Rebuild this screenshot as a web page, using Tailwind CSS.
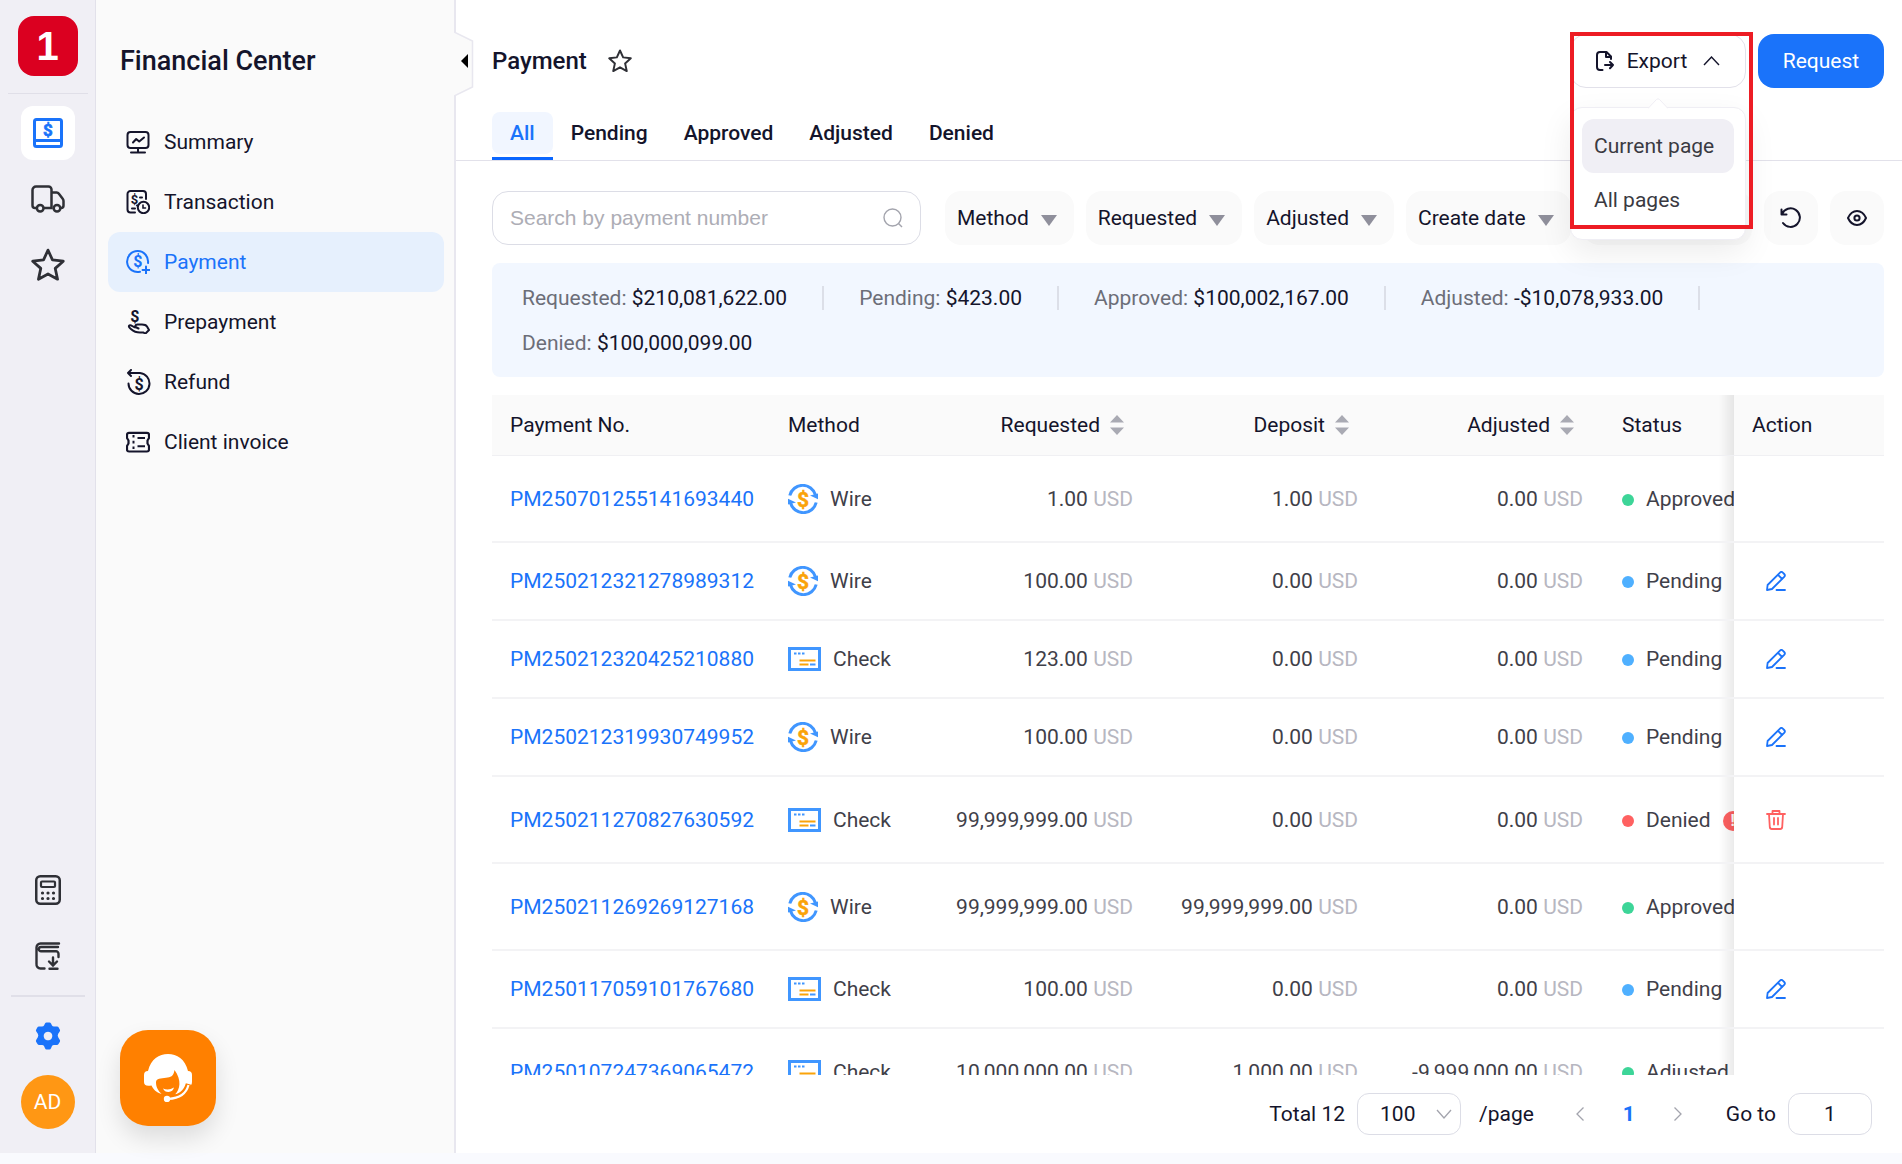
<!DOCTYPE html>
<html lang="en">
<head>
  <meta charset="UTF-8" />
  <meta name="viewport" content="width=device-width, initial-scale=1.0" />
  <title>Payment - Financial Center</title>
  <script src="https://cdn.jsdelivr.net/npm/@tailwindcss/browser@4"></script>
</head>
<body class="h-screen overflow-hidden flex flex-col bg-[#f9fafe] font-[Roboto,sans-serif] text-[21px] leading-[30px] text-[#14142b]">
  <!-- Shared icons -->
  <svg class="hidden">
    <symbol id="i-star" viewBox="0 0 32 32" fill="none" stroke="currentColor" stroke-width="2.6" stroke-linejoin="round">
      <path d="M16 2l4.2 9.200 10.200 1.200-7.600 6.800 2.200 10.200L16 24.400 7 29.400l2.200-10.200L1.600 12.400l10.200-1.200z" />
    </symbol>
    <symbol id="i-wire" viewBox="0 0 30 30">
      <path d="M1.800 11.500A13.300 13.300 0 0 1 27.500 11" fill="none" stroke="#4096ff" stroke-width="3" />
      <path d="M28.200 18.500A13.300 13.300 0 0 1 2.500 19" fill="none" stroke="#4096ff" stroke-width="3" />
      <path d="M22 11.500L30 9.500V15.200zM8 18.500L0 20.500V14.800z" fill="#4096ff" />
      <text x="15" y="22.500" text-anchor="middle" font-size="21" font-weight="700" fill="#faa30a" stroke="#faa30a" stroke-width=".5">$</text>
    </symbol>
    <symbol id="i-check" viewBox="0 0 33 24">
      <rect x="1.500" y="1.500" width="30" height="21" fill="none" stroke="#4096ff" stroke-width="3" />
      <path d="M6 6.500h2.500M10 6.500h2.500M14 6.500h2.500M22 17.500h5.500" stroke="#4096ff" stroke-width="2" />
      <path d="M11.500 13.500h16M11.500 17.500h9" stroke="#faa30a" stroke-width="2.200" />
    </symbol>
    <symbol id="i-edit" viewBox="0 0 20 20" fill="none" stroke="currentColor" stroke-width="1.800" stroke-linejoin="round" stroke-linecap="round">
      <path d="M1 19l.6-5L14 1.600a2 2 0 0 1 2.800 0l1.400 1.400a2 2 0 0 1 0 2.800L6 18zM12 3.800l4.200 4.200M10.500 19H19" />
    </symbol>
    <symbol id="i-trash" viewBox="0 0 20 20" fill="none" stroke="currentColor" stroke-width="1.800" stroke-linejoin="round" stroke-linecap="round">
      <path d="M1 4h18M6.500 4V1h7v3M3 4l.8 13.200a2 2 0 0 0 2 1.800h8.400a2 2 0 0 0 2-1.800L17 4M8 8v6.500M12 8v6.500" />
    </symbol>
  </svg>

  <div class="flex-1 min-h-0 flex bg-white">
    <!-- Icon rail -->
    <aside class="w-24 shrink-0 bg-[#f0eff5] border-r border-[#e2e1ea] flex flex-col items-center pt-4 pb-6">
      <a href="#" aria-label="Home" class="w-[60px] h-[60px] rounded-2xl bg-[#db0020] text-white flex items-center justify-center font-['Liberation_Sans',sans-serif] font-bold text-[40px]">1</a>
      <div class="w-20 h-px bg-[#e0dfe8] mt-[17px] mb-3"></div>
      <nav class="flex flex-col gap-3 text-[#2f3036]">
        <a href="#" aria-label="Finance" class="w-[54px] h-[54px] rounded-xl bg-white text-[#1a73fa] flex items-center justify-center">
          <svg class="w-[30px] h-[30px]" viewBox="0 0 30 30" fill="none" stroke="currentColor" stroke-width="3"><rect x="1.500" y="1.500" width="27" height="27" rx="2" /><path d="M1.500 22.500h27" /><text x="15" y="18" text-anchor="middle" font-size="17" font-weight="700" fill="currentColor" stroke="currentColor" stroke-width=".6">$</text></svg>
        </a>
        <a href="#" aria-label="Shipping" class="w-[54px] h-[54px] flex items-center justify-center">
          <svg class="w-[34px] h-[28px]" viewBox="0 0 34 28" fill="none" stroke="currentColor" stroke-width="2.500"><path d="M5.500 23H4a2.500 2.500 0 0 1-2.500-2.500V5A3.500 3.500 0 0 1 5 1.500h12.500A3 3 0 0 1 20.500 4.500V23H13M20.500 7.500h5.200q1.300 0 2 1l4 5.200q.8 1 .8 2.300v4.500A2.500 2.500 0 0 1 30 23" /><circle cx="9.200" cy="23.300" r="3.300" /><circle cx="26" cy="23.300" r="3.300" /></svg>
        </a>
        <a href="#" aria-label="Favorites" class="w-[54px] h-[54px] flex items-center justify-center"><svg class="w-[34px] h-[34px]"><use href="#i-star" /></svg></a>
      </nav>
      <nav class="mt-auto flex flex-col gap-3 text-[#2f3036]">
        <a href="#" aria-label="Calculator" class="w-[54px] h-[54px] flex items-center justify-center">
          <svg class="w-[26px] h-[30px]" viewBox="0 0 26 30" fill="none" stroke="currentColor" stroke-width="2.500"><rect x="1.250" y="1.250" width="23.500" height="27.500" rx="4" /><rect x="6" y="6.500" width="14" height="5.500" rx="1" stroke-width="2.200" /><path d="M7.500 18h.01M13 18h.01M18.500 18h.01M7.500 23.500h.01M13 23.500h.01M18.500 23.500h.01" stroke-width="3.200" stroke-linecap="round" /></svg>
        </a>
        <a href="#" aria-label="Downloads" class="w-[54px] h-[54px] flex items-center justify-center">
          <svg class="w-[26px] h-[28px]" viewBox="0 0 26 28" fill="none" stroke="currentColor" stroke-width="2.400" stroke-linecap="round"><path d="M24 1.500H5.500A4 4 0 0 0 1.500 5.500V22A4 4 0 0 0 5.500 26.500H9.500M23 5H6a2 2 0 0 0 0 4.300H21a2.500 2.500 0 0 1 2.500 2.500V15M18 15.500v7M14 19.500l4 4 4-4M14.500 26.700h8" /></svg>
        </a>
      </nav>
      <div class="w-[74px] h-0.5 bg-[#e0dfe8] mt-3 mb-3"></div>
      <a href="#" aria-label="Settings" class="w-[54px] h-[54px] flex items-center justify-center text-[#1a73fa]">
        <svg class="w-[26px] h-[28px]" viewBox="0 0 26 28"><path fill="currentColor" fill-rule="evenodd" d="M10 1.500Q10.500.5 11.500.5h3q1 0 1.500 1l1 2q.5 1 2 1h3q1.200 0 1.700 1l1.200 2.200q.5 1-.2 1.900l-1.500 2.200q-1 1.700 0 3.400l1.500 2.600q.7 1 .2 2l-1.400 2.200q-.5.900-1.600.900h-2.900q-1.500 0-2 1l-1 2.300q-.5 1.300-1.500 1.300h-3q-1 0-1.500-1.300l-1-2.300q-.5-1-2-1H4.100q-1.100 0-1.600-.9L1.100 19.800q-.5-1 .2-2l1.500-2.600q1-1.700 0-3.400L1.300 9.600q-.7-.9-.2-1.900l1.200-2.200q.5-1 1.700-1h3q1.500 0 2-1zM13 9.700a4.300 4.300 0 1 0 .01 0z" /></svg>
      </a>
      <button class="w-[54px] h-[54px] mt-3 rounded-full bg-[#ff9714] text-white">AD</button>
    </aside>

    <!-- Section menu -->
    <aside class="w-[360px] shrink-0 bg-[#fafafa] border-r-2 border-[#e8e7ef] pl-3 pr-[10px] pt-10">
      <h2 class="text-[27px] leading-[42px] font-medium pl-3 mb-[30px]">Financial Center</h2>
      <nav>
        <a href="#" class="h-[60px] px-[18px] flex items-center gap-3.5 rounded-xl">
          <svg class="w-6 h-6" viewBox="0 0 24 24" fill="none" stroke="currentColor" stroke-width="2" stroke-linecap="round" stroke-linejoin="round"><rect x="1.500" y="2" width="21" height="16" rx="3" /><path d="M7 12.500l3.200-3.500 3 2.500L18 7.500M12 18v4.500M5 22.500h14" /></svg>
          Summary
        </a>
        <a href="#" class="h-[60px] px-[18px] flex items-center gap-3.5 rounded-xl">
          <svg class="w-6 h-6" viewBox="0 0 24 24" fill="none" stroke="currentColor" stroke-width="2" stroke-linecap="round"><path d="M20 9V4a3 3 0 0 0-3-3H4.500a3 3 0 0 0-3 3v15.500a3 3 0 0 0 3 3H9M14 7.500h2M6 18.500h3M12 15.500h-1" /><circle cx="17.500" cy="17.500" r="5.700" /><path d="M17 15v3h2.500" stroke-width="1.600" /><text x="8.500" y="14" text-anchor="middle" font-size="13" font-weight="700" fill="currentColor" stroke="none">$</text></svg>
          Transaction
        </a>
        <a href="#" class="h-[60px] px-[18px] flex items-center gap-3.5 rounded-xl bg-[#e6f0fd] text-[#1a73fa]">
          <svg class="w-6 h-6" viewBox="0 0 24 24" fill="none" stroke="currentColor" stroke-width="2" stroke-linecap="round"><path d="M22 13A10.500 10.500 0 1 0 14 21.800M20 16.500v7M16.500 20h7" /><text x="11.800" y="17.200" text-anchor="middle" font-size="16" font-weight="700" fill="currentColor" stroke="none">$</text></svg>
          Payment
        </a>
        <a href="#" class="h-[60px] px-[18px] flex items-center gap-3.5 rounded-xl">
          <svg class="w-6 h-6" viewBox="0 0 24 24" fill="none" stroke="currentColor" stroke-width="2" stroke-linecap="round" stroke-linejoin="round"><path d="M10.500 17.500l-2-.3c-1.500-.3-3.500-2.700-5-1.900-1.600 1 .3 2.700 1.700 3.900 2.500 2.300 5 3.300 8.800 3.300h3.500L19.500 24M23 20l-2-3.500c-1-1.500-3-2-5-2h-4.500c-2.300.2-3 1.500-1 3l2 1M23 20l-3 3" /><text x="8.800" y="12" text-anchor="middle" font-size="16" font-weight="700" fill="currentColor" stroke="none">$</text></svg>
          Prepayment
        </a>
        <a href="#" class="h-[60px] px-[18px] flex items-center gap-3.5 rounded-xl">
          <svg class="w-[26px] h-[26px] -mr-0.5" viewBox="0 0 26 26" fill="none" stroke="currentColor" stroke-width="2" stroke-linecap="round" stroke-linejoin="round"><path d="M2 4h12a10.500 10.500 0 1 1-11.500 10.500M5 1L2 4l3 3" /><text x="13" y="20.500" text-anchor="middle" font-size="16" font-weight="700" fill="currentColor" stroke="none">$</text></svg>
          Refund
        </a>
        <a href="#" class="h-[60px] px-[18px] flex items-center gap-3.5 rounded-xl">
          <svg class="w-6 h-6" viewBox="0 0 24 24" fill="none" stroke="currentColor" stroke-width="2.200" stroke-linejoin="round"><path d="M3 2.800h18A2 2 0 0 1 23 4.800V8l-1.500 2.500v3L23 16v3.500a2 2 0 0 1-2 2H3a2 2 0 0 1-2-2V16l1.500-2.500v-3L1 8V4.800a2 2 0 0 1 2-2z" /><path d="M7.500 5v2.500M7.500 10.800v2.700M7.500 16.500V19M11.500 8h7.500M11.500 16.300h7.500" stroke-width="2" /></svg>
          Client invoice
        </a>
      </nav>
    </aside>

    <!-- Main content -->
    <main class="relative flex-1 min-w-0 flex flex-col">
      <button aria-label="Collapse menu" class="absolute -left-0.5 top-[31px]">
        <svg class="w-5 h-[66px]" viewBox="0 0 20 66"><path d="M0 1l18.500 9v46L0 65" fill="#fafafa" stroke="#e8e7ef" stroke-width="1.500" /><path d="M14 23v14L7 30z" fill="#000" /></svg>
      </button>

      <header class="pt-[34px] pl-9 pr-[18px] flex items-center">
        <h1 class="text-[24px] leading-[42px] font-medium">Payment</h1>
        <button aria-label="Add to favorites" class="ml-[21px] text-[#2f3036]"><svg class="w-6 h-6"><use href="#i-star" /></svg></button>
        <div class="relative ml-auto">
          <button class="w-[176px] h-[54px] flex items-center justify-center border border-[#e2e1ea] rounded-2xl bg-white">
            <svg class="w-[18px] h-5 mr-[13px]" viewBox="0 0 18 20" fill="none" stroke="currentColor" stroke-width="2" stroke-linejoin="round" stroke-linecap="round"><path d="M6.500 19H4a3 3 0 0 1-3-3V4a3 3 0 0 1 3-3h6.500l4.500 4.500V8M10 1.500V6h4.500M9 14h8M14 11l3 3-3 3.200" /></svg>
            Export
            <svg class="w-[17px] h-[10px] ml-4" viewBox="0 0 17 10" fill="none" stroke="currentColor" stroke-width="1.400"><path d="M1 9l7.500-8L16 9" /></svg>
          </button>
          <!-- Export menu -->
          <div class="absolute z-20 top-[73px] left-0 w-[176px] bg-white border border-[#efeef4] rounded-xl p-[11px] pb-3 text-[#3a3a42] shadow-[0_12px_32px_rgba(0,0,0,0.08)]">
            <svg class="absolute -top-[10px] left-[77px] w-5 h-[11px]" viewBox="0 0 20 11"><path d="M0 10.500L8.500 1.500q1.500-1.500 3 0L20 10.500" fill="#fff" stroke="#efeef4" /></svg>
            <button class="block w-full h-[54px] px-3 rounded-xl bg-[#f0eff5] text-left whitespace-nowrap">Current page</button>
            <button class="block w-full h-[54px] px-3 rounded-xl text-left whitespace-nowrap">All pages</button>
          </div>
          <div class="absolute z-30 -top-0.5 left-0 w-[183px] h-[197px] border-4 border-[#ed1c24] pointer-events-none"></div>
        </div>
        <button class="ml-3 w-[126px] h-[54px] rounded-2xl bg-[#1a73fa] text-white">Request</button>
      </header>

      <nav class="mt-6 pl-9 flex font-medium border-b border-[#e2e1ea]">
        <a href="#" class="border-b-3 border-[#0a66ff] pb-[3px] text-[#1a73fa]"><span class="block px-[18px] py-1.5 rounded-lg bg-[#f1f6ff]">All</span></a>
        <a href="#" class="px-[18px] py-1.5">Pending</a>
        <a href="#" class="px-[18px] py-1.5">Approved</a>
        <a href="#" class="px-[18px] py-1.5">Adjusted</a>
        <a href="#" class="px-[18px] py-1.5">Denied</a>
      </nav>

      <div class="mt-[30px] pl-9 pr-[18px] flex gap-3">
        <label class="w-[429px] h-[54px] mr-3 px-[17px] flex items-center border border-[#dcdde6] rounded-2xl">
          <input type="text" aria-label="Search by payment number" placeholder="Search by payment number" class="flex-1 min-w-0 outline-none font-['Liberation_Sans',sans-serif] placeholder:text-[#adadb5]" />
          <svg class="w-5 h-5" viewBox="0 0 20 20" fill="none" stroke="#a3a4ad" stroke-width="1.400"><circle cx="9.500" cy="9.500" r="8.500" /><path d="M15.500 15.500l3.500 3.500" /></svg>
        </label>
        <button class="h-[54px] pl-3 pr-[17px] flex items-center gap-3 rounded-2xl bg-[#fafafa]">Method <svg class="w-4 h-[11px] mt-1" viewBox="0 0 16 11"><path d="M0 0h16L8 11z" fill="#8f8f9b" /></svg></button>
        <button class="h-[54px] pl-3 pr-[17px] flex items-center gap-3 rounded-2xl bg-[#fafafa]">Requested <svg class="w-4 h-[11px] mt-1" viewBox="0 0 16 11"><path d="M0 0h16L8 11z" fill="#8f8f9b" /></svg></button>
        <button class="h-[54px] pl-3 pr-[17px] flex items-center gap-3 rounded-2xl bg-[#fafafa]">Adjusted <svg class="w-4 h-[11px] mt-1" viewBox="0 0 16 11"><path d="M0 0h16L8 11z" fill="#8f8f9b" /></svg></button>
        <button class="h-[54px] pl-3 pr-[17px] flex items-center gap-3 rounded-2xl bg-[#fafafa] whitespace-nowrap">Create date <svg class="w-4 h-[11px] mt-1" viewBox="0 0 16 11"><path d="M0 0h16L8 11z" fill="#8f8f9b" /></svg></button>
        <button aria-label="More filters" class="flex-1 h-[54px] rounded-2xl bg-[#fafafa]"></button>
        <button aria-label="Reset" class="w-[54px] h-[54px] flex items-center justify-center rounded-2xl bg-[#fafafa]">
          <svg class="w-[22px] h-[22px]" viewBox="0 0 22 22" fill="none" stroke="currentColor" stroke-width="2" stroke-linecap="round" stroke-linejoin="round"><path d="M1.500 2.500v5h5M2 7A9.300 9.300 0 1 1 3 16" /></svg>
        </button>
        <button aria-label="Columns" class="w-[54px] h-[54px] flex items-center justify-center rounded-2xl bg-[#fafafa]">
          <svg class="w-5 h-4" viewBox="0 0 20 16" fill="none" stroke="currentColor" stroke-width="2"><path d="M1 8C3 3.500 6 1 10 1s7 2.500 9 7c-2 4.500-5 7-9 7S3 12.500 1 8z" /><circle cx="10" cy="8" r="2.600" /></svg>
        </button>
      </div>

      <!-- Totals -->
      <div id="totals" class="mt-[18px] ml-9 mr-[18px] px-[30px] py-3 flex flex-wrap rounded-lg bg-[#f2f7ff] text-[#6c6e78]"></div>

      <!-- Payments -->
      <div class="mt-[18px] ml-9 mr-[18px] flex-1 min-h-0 overflow-hidden">
        <table class="w-full min-w-[1484px] table-fixed border-separate border-spacing-0">
          <colgroup>
            <col class="w-[278px]" /><col class="w-[156px]" /><col class="w-[225px]" /><col class="w-[225px]" /><col class="w-[225px]" /><col class="w-[225px]" /><col class="w-[150px]" />
          </colgroup>
          <thead>
            <tr id="head" class="h-[61px]"></tr>
          </thead>
          <tbody id="rows" class="text-[#3f4049]"></tbody>
        </table>
      </div>

      <footer class="py-[18px] pr-[30px] flex items-center justify-end">
        <span>Total 12</span>
        <label class="relative ml-3">
          <select aria-label="Rows per page" class="appearance-none w-[104px] h-[42px] pl-[22px] border border-[#dcdde6] rounded-xl bg-white outline-none"><option>100</option></select>
          <svg class="absolute right-[9px] top-4 w-4 h-[10px] pointer-events-none" viewBox="0 0 16 10" fill="none" stroke="#a3a4ad" stroke-width="1.300"><path d="M1 1l7 8 7-8" /></svg>
        </label>
        <span class="ml-[18px]">/page</span>
        <button aria-label="Previous page" class="ml-[42px]"><svg class="w-2 h-[14px]" viewBox="0 0 8 14" fill="none" stroke="#a3a4ad" stroke-width="1.300"><path d="M7.500.5L1 7l6.500 6.500" /></svg></button>
        <button class="w-[90px] font-bold text-[#1a73fa]">1</button>
        <button aria-label="Next page"><svg class="w-2 h-[14px]" viewBox="0 0 8 14" fill="none" stroke="#a3a4ad" stroke-width="1.300"><path d="M.5.5L7 7 .5 13.500" /></svg></button>
        <label for="goto" class="ml-11">Go to</label>
        <input id="goto" type="text" value="1" class="ml-3 w-[84px] h-[42px] border border-[#dcdde6] rounded-xl text-center outline-none" />
      </footer>
    </main>
  </div>
  <div class="h-[11px]"></div>

  <!-- Support button -->
  <button aria-label="Support" class="fixed left-[120px] bottom-[38px] w-24 h-24 rounded-[28px] bg-[#ff8000] flex items-center justify-center shadow-[0_12px_24px_rgba(0,0,0,0.12)]">
    <svg class="w-12 h-12" viewBox="0 0 48 48">
      <path fill="#fff" d="M4 17C7 5 15 0 24 0s17 5 20 17q4 0 4 4v7q0 4-4 4.500c-3 4-7 7-13 8 5-5 7-14-.5-24.500-1 7-4 7-8.500 7.800-5 .8-10 .2-10 4.700 0 5 2.500 8.500 5.500 11.500C12 38.500 9 35 7.500 31.500 2 32.500 0 31 0 28v-7q0-4 4-4z" />
      <path fill="#fff" d="M19 34.500q5.500 2.500 11-1-1 4-5.500 4.500-4 0-5.500-3.500z" />
      <path d="M44.500 30C42 39 36 43.500 24 45" fill="none" stroke="#ff8000" stroke-width="5.500" />
      <path d="M44.500 31C42 40 36 44 24 45" fill="none" stroke="#fff" stroke-width="2.200" />
      <circle cx="23" cy="45" r="3.200" fill="#fff" />
    </svg>
  </button>

  <script>
    const totals = [
      ['Requested', '$210,081,622.00'],
      ['Pending', '$423.00'],
      ['Approved', '$100,002,167.00'],
      ['Adjusted', '-$10,078,933.00'],
      ['Denied', '$100,000,099.00'],
    ];

    const payments = [
      ['PM250701255141693440', 'Wire', '1.00', '1.00', '0.00', 'Approved'],
      ['PM250212321278989312', 'Wire', '100.00', '0.00', '0.00', 'Pending'],
      ['PM250212320425210880', 'Check', '123.00', '0.00', '0.00', 'Pending'],
      ['PM250212319930749952', 'Wire', '100.00', '0.00', '0.00', 'Pending'],
      ['PM250211270827630592', 'Check', '99,999,999.00', '0.00', '0.00', 'Denied'],
      ['PM250211269269127168', 'Wire', '99,999,999.00', '99,999,999.00', '0.00', 'Approved'],
      ['PM250117059101767680', 'Check', '100.00', '0.00', '0.00', 'Pending'],
      ['PM250107247369065472', 'Check', '10,000,000.00', '1,000.00', '-9,999,000.00', 'Adjusted'],
    ];

    const dots = { Approved: 'bg-[#3dd598]', Adjusted: 'bg-[#3dd598]', Pending: 'bg-[#4fb0ff]', Denied: 'bg-[#ff6161]' };
    const icons = {
      Wire: '<svg class="w-[30px] h-[30px]"><use href="#i-wire" /></svg>',
      Check: '<svg class="w-[33px] h-6"><use href="#i-check" /></svg>',
    };
    const actions = {
      Pending: '<button aria-label="Edit" class="block ml-3.5 text-[#1a73fa]"><svg class="w-5 h-5"><use href="#i-edit" /></svg></button>',
      Denied: '<button aria-label="Delete" class="block ml-3.5 text-[#ff6161]"><svg class="w-5 h-5"><use href="#i-trash" /></svg></button>',
    };
    const sorter = '<svg class="w-3.5 h-5" viewBox="0 0 14 20"><path d="M7 0l7 7.500H0zM7 20l7-7.500H0z" fill="#a9aab3" /></svg>';
    // fade to the left of the pinned column
    const edge = '<span class="absolute right-full inset-y-0 w-[15px] bg-linear-to-l from-black/8 to-transparent"></span>';

    document.getElementById('totals').innerHTML = totals.map(([name, sum], i) => `
      <div class="h-[45px] flex items-center whitespace-nowrap">
        <span>${name}: <span class="text-[#14142b]">${sum}</span></span>
        ${i < totals.length - 1 ? '<span class="w-0.5 h-6 mx-[35px] bg-[#dcdfe8]"></span>' : ''}
      </div>`).join('');

    document.getElementById('head').innerHTML = ['Payment No.', 'Method', 'Requested', 'Deposit', 'Adjusted', 'Status', 'Action'].map((name, i) => {
      if (i > 1 && i < 5) {
        return `<th class="px-[18px] font-normal bg-[#fafafa] border-b border-[#f0f0f3]"><div class="flex items-center justify-end gap-[10px] pr-[9px]">${name}${sorter}</div></th>`;
      }
      if (i === 5) {
        return `<th class="px-[21px] text-left font-normal bg-[#fafafa] border-b border-[#f0f0f3]">${name}</th>`;
      }
      if (i === 6) {
        return `<th class="sticky right-0 px-[18px] text-left font-normal bg-[#fafafa] border-b border-[#f0f0f3]">${edge}${name}</th>`;
      }
      return `<th class="px-[18px] text-left font-normal bg-[#fafafa] border-b border-[#f0f0f3]">${name}</th>`;
    }).join('');

    document.getElementById('rows').innerHTML = payments.map(([no, method, requested, deposit, adjusted, status]) => `
      <tr class="${status === 'Pending' ? 'h-[78px]' : 'h-[87px]'}">
        <td class="px-[18px] border-b-2 border-[#f3f3f5]"><a href="#" class="text-[#1a73fa]">${no}</a></td>
        <td class="px-[18px] border-b-2 border-[#f3f3f5]"><div class="flex items-center gap-3">${icons[method]}${method}</div></td>
        ${[requested, deposit, adjusted].map(sum => `
        <td class="px-[18px] border-b-2 border-[#f3f3f5] text-right whitespace-nowrap">${sum} <span class="text-[#b7b7c1]">USD</span></td>`).join('')}
        <td class="px-[21px] border-b-2 border-[#f3f3f5]">
          <div class="flex items-center gap-3">
            <span class="w-3 h-3 mt-0.5 rounded-full ${dots[status]}"></span>${status}
            ${status === 'Denied' ? '<span class="w-5 h-5 mt-0.5 rounded-full bg-[#ff6161] text-white text-base leading-5 font-bold text-center">!</span>' : ''}
          </div>
        </td>
        <td class="sticky right-0 px-[18px] bg-white border-b-2 border-[#f3f3f5]">${edge}${actions[status] || ''}</td>
      </tr>`).join('');
  </script>
</body>
</html>
